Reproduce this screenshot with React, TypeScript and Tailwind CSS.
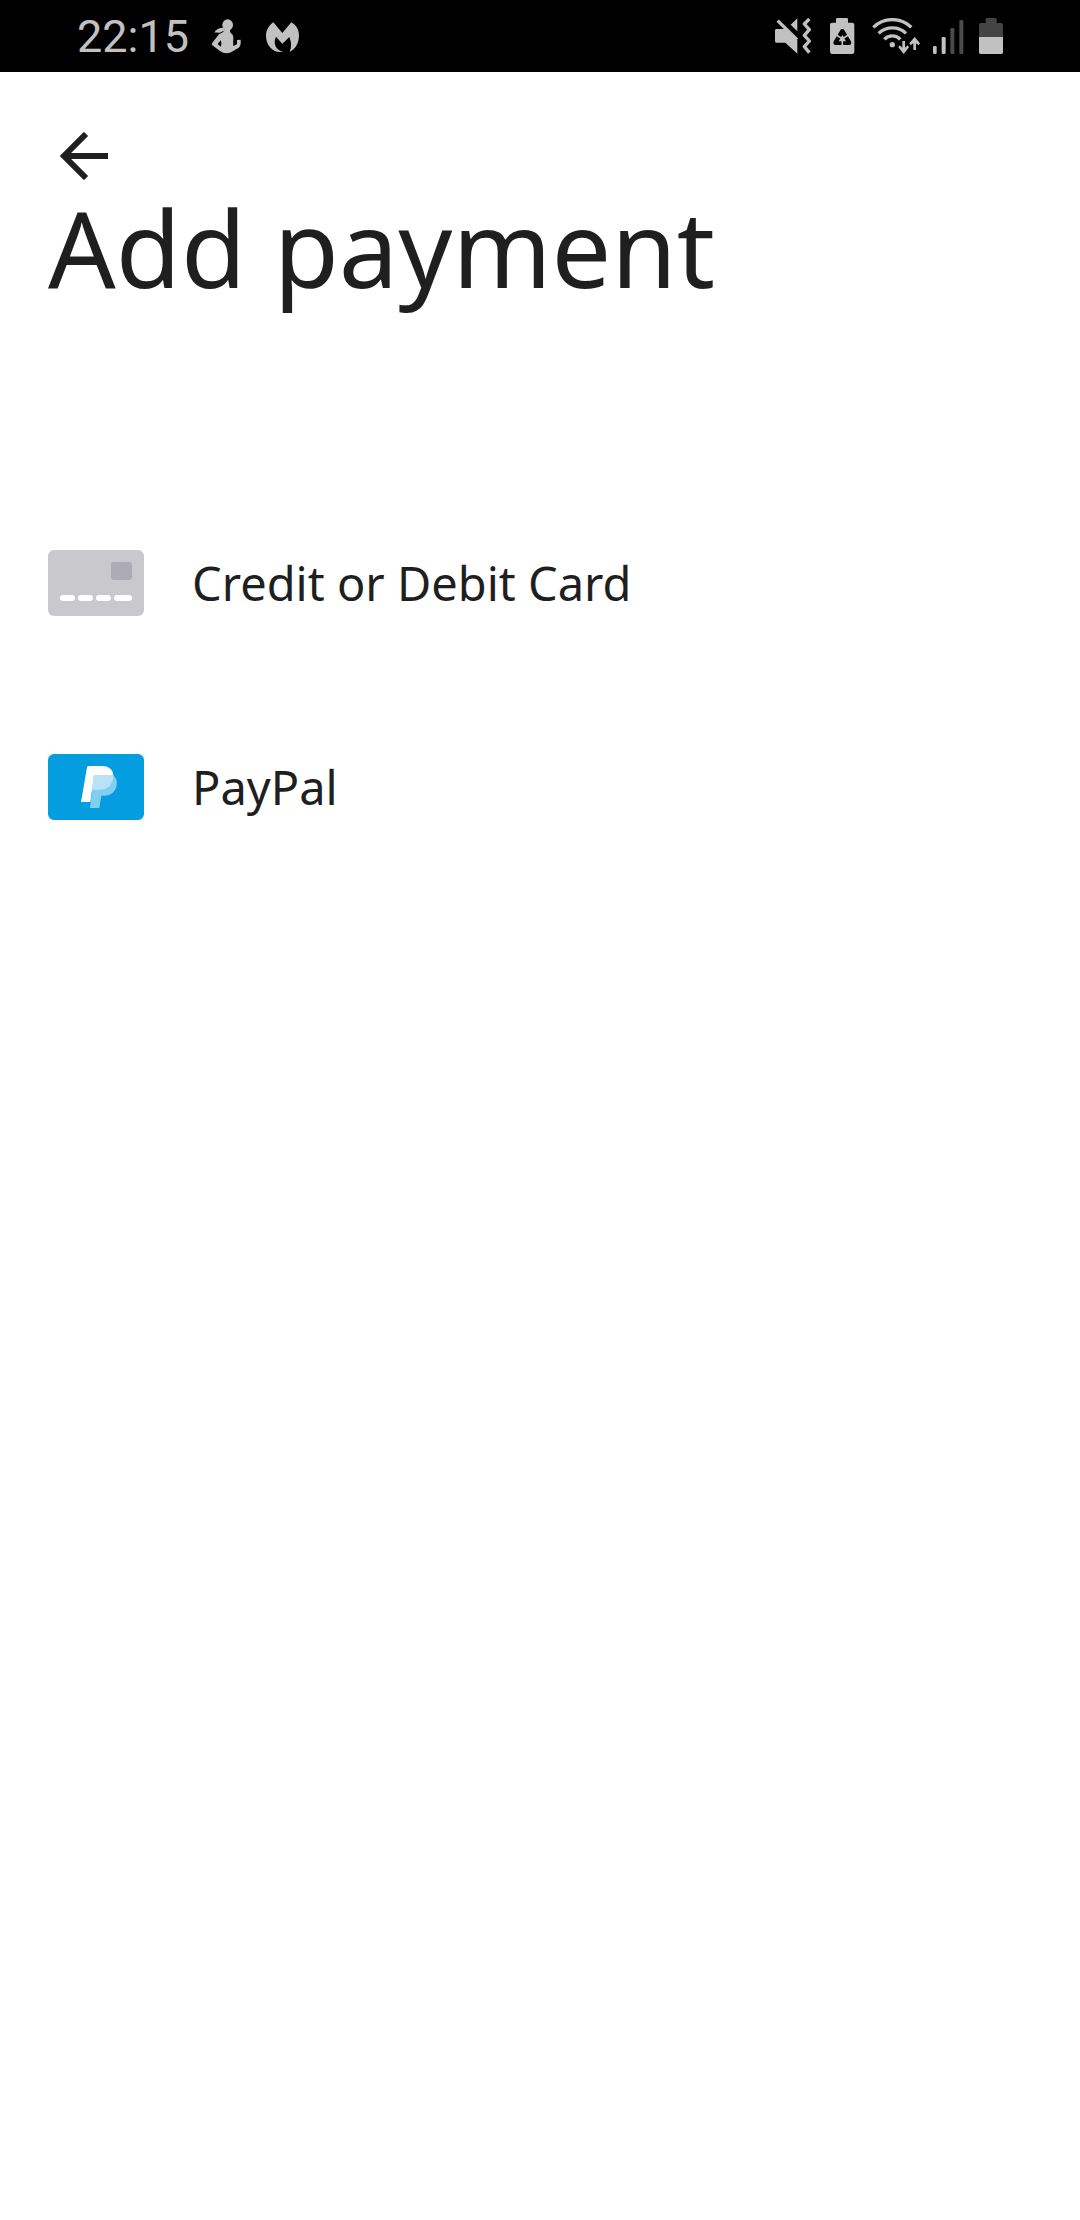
import React from 'react';

// --- Types ---
interface PaymentMethod {
  id: string;
  label: string;
  icon: React.ReactNode;
}

// --- Status bar icons ---
const WorkoutIcon = () => (
  <svg viewBox="0 0 96 108" className="h-9 w-8" fill="currentColor" aria-hidden="true">
    <ellipse cx="50" cy="21" rx="16" ry="17" />
    <path d="M39 29C26 28 15 33 10 44C18 43 26 46 32 41L40 38Z" />
    <path
      fillRule="evenodd"
      d="M40 34L57 34C56 42 59 46 64 49C70 58 65 70 67 84L78 79V66L89 65C90 79 88 85 82 90L60 103C48 108 36 106 28 100L3 81C1 78 4 75 6 72L22 51C27 44 40 46 40 34ZM29 67L20 78L29 86C32 80 32 74 29 67Z"
    />
  </svg>
);

const ShieldAppIcon = () => (
  <svg viewBox="0 0 108 108" className="size-9" fill="currentColor" aria-hidden="true">
    <path d="M25 13L52 45L79 13C94 22 103 36 102 54C101 77 91 94 74 101C80 87 80 73 73 57L52 77L33 56C23 76 33 97 54 101C26 107 3 84 3 54C3 37 11 23 25 13Z" />
  </svg>
);

const MutedIcon = () => (
  <svg viewBox="0 0 126 108" className="h-9 w-[42px]" fill="currentColor" aria-hidden="true">
    <path d="M3 33H30L67 66V107L31 74H3L0 71V36Z" />
    <path d="M47 20L67 1V40Z" />
    <path d="M8 8L66 65" stroke="currentColor" strokeWidth="10" fill="none" />
    <path
      d="M103 3L88 18L103 35L88 52L103 69L88 86L103 104"
      stroke="currentColor"
      strokeWidth="10"
      strokeLinejoin="round"
      fill="none"
    />
  </svg>
);

const BatterySaverIcon = () => (
  <svg viewBox="0 0 93 108" className="h-9 w-[31px]" fill="currentColor" aria-hidden="true">
    <rect x="21" y="0" width="36" height="24" rx="4" />
    <rect x="3" y="14" width="73" height="94" rx="7" />
    <path d="M40 40L20 74H60Z" fill="none" stroke="#000" strokeWidth="14" strokeLinejoin="round" />
    <path d="M40 62V84M40 62L18 49M40 62L62 49" fill="none" stroke="currentColor" strokeWidth="5" />
    <path d="M40 51L29 70H51Z" />
  </svg>
);

const WifiIcon = () => (
  <svg viewBox="0 0 144 108" className="h-9 w-12" fill="currentColor" aria-hidden="true">
    <g stroke="currentColor" strokeWidth="10" fill="none">
      <path d="M4 28C36 -3 86 -3 118 28" />
      <path d="M20 46C43 24 79 24 102 46" />
      <path d="M37 64C50 50 72 50 85 64" />
    </g>
    <circle cx="61" cy="80" r="8" />
    <path d="M91 69H99V89L107 82L111 88L95 108L79 88L83 82L91 89Z" />
    <path d="M124 96H132V76L140 82L144 76L128 57L112 76L116 82L124 76Z" />
  </svg>
);

const SignalIcon = () => (
  <svg viewBox="0 0 105 108" className="h-9 w-[35px]" fill="currentColor" aria-hidden="true">
    <rect x="3" y="84" width="11" height="24" rx="4" />
    <rect x="29" y="57" width="12" height="51" rx="4" />
    <rect x="55" y="30" width="12" height="78" rx="4" fill="#4a4a4a" />
    <rect x="82" y="6" width="12" height="102" rx="4" fill="#4a4a4a" />
  </svg>
);

const BatteryIcon = () => (
  <svg viewBox="0 0 72 108" className="h-9 w-6" aria-hidden="true">
    <rect x="20" y="0" width="33" height="24" rx="4" fill="#444" />
    <path d="M5 15H67Q72 15 72 20V57H0V20Q0 15 5 15Z" fill="#444" />
    <path d="M0 57H72V103Q72 108 67 108H5Q0 108 0 103Z" fill="currentColor" />
  </svg>
);

// --- Page icons ---
const BackArrow = () => (
  <svg viewBox="0 0 48 48" className="size-12" fill="none" stroke="currentColor" strokeWidth="6" aria-hidden="true">
    <path d="M48 24H6" />
    <path d="M26 2L4 24L26 46" />
  </svg>
);

const CardIcon = () => (
  <svg viewBox="0 0 288 198" className="h-[66px] w-24 shrink-0" aria-hidden="true">
    <rect width="288" height="198" rx="18" fill="#c9c8cd" />
    <rect x="189" y="36" width="63" height="54" rx="9" fill="#adacb5" />
    <g fill="#fff">
      <rect x="36" y="135" width="45" height="18" rx="9" />
      <rect x="90" y="135" width="45" height="18" rx="9" />
      <rect x="144" y="135" width="45" height="18" rx="9" />
      <rect x="198" y="135" width="54" height="18" rx="9" />
    </g>
  </svg>
);

const PayPalIcon = () => (
  <svg viewBox="0 0 288 198" className="h-[66px] w-24 shrink-0" aria-hidden="true">
    <rect width="288" height="198" rx="18" fill="#039de0" />
    <path
      d="M122 36Q118 36 117 40L99 144H127L132 108H155C180 108 196 92 196 66C196 46 182 36 162 36Z"
      fill="#fff"
    />
    <path
      d="M142 63H193C204 69 209 81 206 94C202 115 188 125 170 125H160L154 162H126L137 68Q138 63 142 63Z"
      fill="#81cff0"
    />
    <path
      d="M142 63H196C196 92 180 107 155 107H132L137 68Q138 63 142 63Z"
      fill="#b9e2f6"
    />
  </svg>
);

const paymentMethods: PaymentMethod[] = [
  { id: 'card', label: 'Credit or Debit Card', icon: <CardIcon /> },
  { id: 'paypal', label: 'PayPal', icon: <PayPalIcon /> },
];

// --- Sub-Components ---
const StatusBar = () => (
  <div className="flex h-[72px] items-center justify-between bg-black px-[77px] text-[#c1c1c1]">
    <div className="flex items-center gap-[22px]">
      <span className="pt-0.5 font-['Roboto',sans-serif] text-[45px] leading-[54px]">22:15</span>
      <WorkoutIcon />
      <ShieldAppIcon />
    </div>
    <div className="flex items-center gap-3">
      <MutedIcon />
      <BatterySaverIcon />
      <WifiIcon />
      <SignalIcon />
      <BatteryIcon />
    </div>
  </div>
);

const PaymentRow: React.FC<{ method: PaymentMethod }> = ({ method }) => (
  <li>
    <button type="button" className="flex w-full items-center gap-12 px-12 py-[69px] text-left">
      {method.icon}
      <span className="text-[47px] leading-[62px]">{method.label}</span>
    </button>
  </li>
);

// --- Main Component ---
const App: React.FC = () => (
  <div className="min-h-screen bg-white font-['Noto_Sans',sans-serif] text-[#1f1f1f]">
    <StatusBar />
    <header className="px-12 pt-[60px]">
      <button type="button" aria-label="Back" className="block px-3">
        <BackArrow />
      </button>
      <h1 className="text-[106px] leading-[134px]">Add payment</h1>
    </header>
    <main className="pt-[167px]">
      <ul>
        {paymentMethods.map((method) => (
          <PaymentRow key={method.id} method={method} />
        ))}
      </ul>
    </main>
  </div>
);

export default App;
